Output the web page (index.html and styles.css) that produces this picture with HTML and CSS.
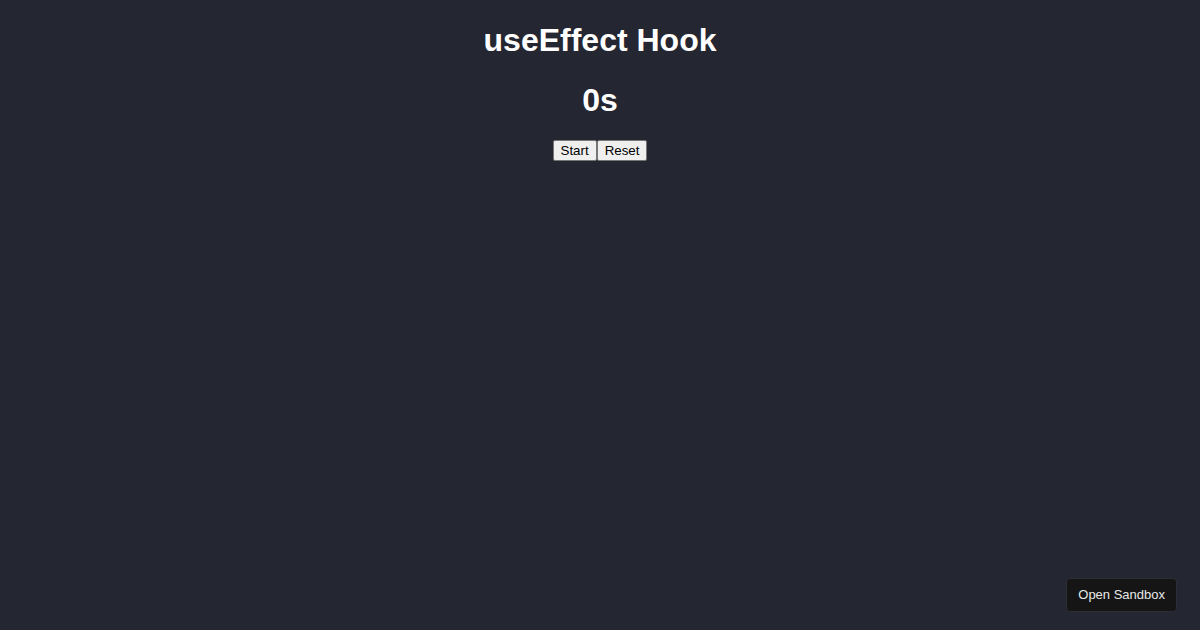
FILE: index.html
```html
<!DOCTYPE html>
<html>
<head>
<meta charset="utf-8">
<link rel="stylesheet" href="styles.css">
</head>
<body>
<div class="app">
  <h1 class="title">useEffect Hook</h1>
  <h1 class="timer">0s</h1>
  <div class="controls"><button class="btn">Start</button><button class="btn">Reset</button></div>
</div>
<a class="sandbox">Open Sandbox</a>
</body>
</html>
```
FILE: styles.css
```css
html, body {
  background: #242631;
}
body {
  margin: 0 8px;
  font-family: "Liberation Sans", Arial, sans-serif;
  color: #ffffff;
}
.app {
  text-align: center;
}
.title, .timer {
  font-size: 32px;
  font-weight: bold;
  margin: 22.44px 0 21.44px;
}
.controls {
  display: flex;
  justify-content: center;
}
.btn {
  font-family: "Liberation Sans", Arial, sans-serif;
  font-size: 13.33px;
  padding: 1px 7px;
  background: #efefef;
  color: #000;
  border: 1px solid #767676;
  border-radius: 2px;
  height: 21px;
}
.sandbox {
  position: fixed;
  right: 23px;
  bottom: 18px;
  background: #151515;
  border: 1px solid #2e2f36;
  border-radius: 4px;
  color: #e8e8e8;
  font-family: "Liberation Sans", Arial, sans-serif;
  font-size: 13px;
  padding: 9px 11px;
  line-height: 14px;
}
```
